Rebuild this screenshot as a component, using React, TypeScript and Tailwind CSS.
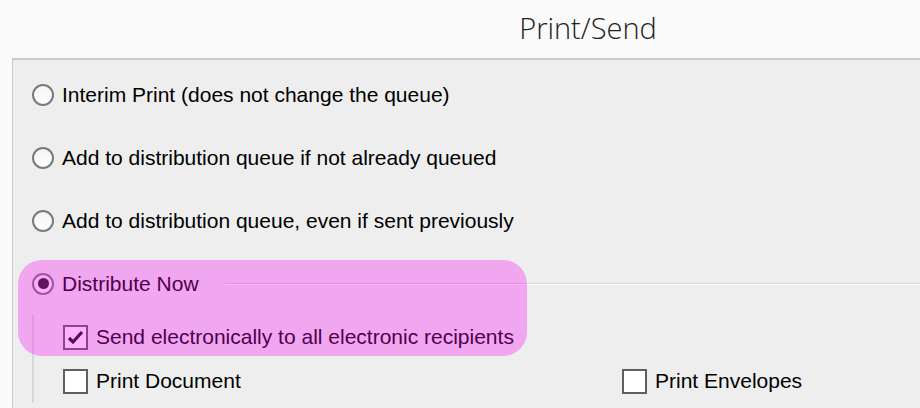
function Radio({ checked = false }: { checked?: boolean }) {
  return (
    <span className="flex h-[22px] w-[22px] shrink-0 items-center justify-center rounded-full border-2 border-[#7a7a7a] bg-gradient-to-b from-[#f4f4f4] to-white">
      {checked && <span className="h-[11px] w-[11px] rounded-full bg-[#1e1e1e]" />}
    </span>
  );
}

function Checkbox({ checked = false }: { checked?: boolean }) {
  return (
    <span className="flex h-[25px] w-[25px] shrink-0 items-center justify-center border-2 border-[#5f5f5f] bg-white">
      {checked && (
        <svg width="17" height="15" viewBox="0 0 17 15">
          <path d="M2 8 L6 12 L15 2" fill="none" stroke="#111" strokeWidth="3.2" />
        </svg>
      )}
    </span>
  );
}

function RadioRow({ label, checked }: { label: string; checked?: boolean }) {
  return (
    <div className="flex h-[63px] items-center gap-[8px]">
      <Radio checked={checked} />
      <span>{label}</span>
    </div>
  );
}

export default function App() {
  return (
    <div className="relative flex h-[408px] w-[920px] flex-col overflow-hidden bg-[#fafafa] font-['Liberation_Sans',sans-serif] text-[21px] text-black">
      <header className="flex h-[58px] shrink-0 items-center justify-center pl-[256px]">
        <h1 className="pb-[2px] font-['Open_Sans',sans-serif] text-[29px] font-light text-[#222]">Print/Send</h1>
      </header>

      <div className="ml-[12px] flex-1 border-l border-t-2 border-[#cbcbcb] bg-[#eeeeee] pl-[19px] pt-[3px]">
        <RadioRow label="Interim Print (does not change the queue)" />
        <RadioRow label="Add to distribution queue if not already queued" />
        <RadioRow label="Add to distribution queue, even if sent previously" />

        <div className="flex h-[63px] items-center gap-[8px]">
          <Radio checked />
          <span>Distribute Now</span>
          <span className="ml-[18px] h-[2px] flex-1 border-t border-b border-t-[#d6d6d6] border-b-white" />
        </div>

        <div className="border-l-2 border-l-[#d8d8d8] pl-[29px]">
          <div className="flex h-[44px] items-center gap-[8px]">
            <Checkbox checked />
            <span>Send electronically to all electronic recipients</span>
          </div>
          <div className="flex h-[44px] items-center">
            <div className="flex w-[559px] items-center gap-[8px]">
              <Checkbox />
              <span>Print Document</span>
            </div>
            <div className="flex items-center gap-[8px]">
              <Checkbox />
              <span>Print Envelopes</span>
            </div>
          </div>
        </div>
      </div>

      <div className="pointer-events-none absolute left-[18px] top-[260px] h-[96px] w-[509px] rounded-[24px] bg-[#fa00f5]/30" />
    </div>
  );
}
